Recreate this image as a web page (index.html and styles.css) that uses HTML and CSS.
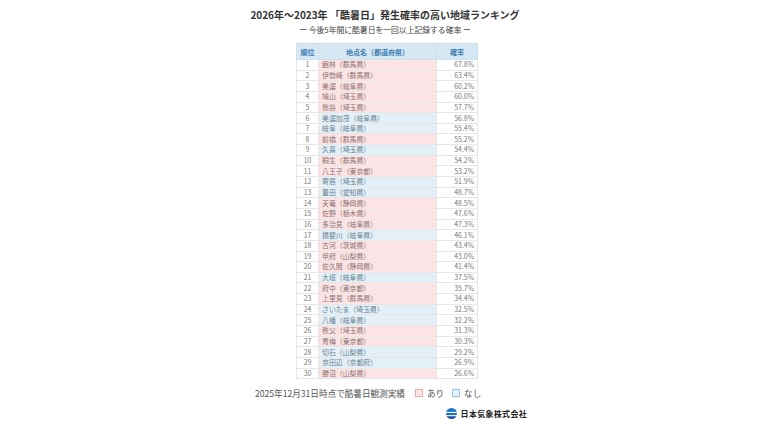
FILE: index.html
```html
<!DOCTYPE html>
<html lang="ja">
<head>
<meta charset="utf-8">
<title>酷暑日発生確率ランキング</title>
<link rel="stylesheet" href="styles.css">
</head>
<body>
<div class="page">
  <h1 class="title">2026年～2023年 「酷暑日」発生確率の高い地域ランキング</h1>
  <p class="sub">ー 今後5年間に酷暑日を一回以上記録する確率 ー</p>
  <table class="rank">
    <thead>
      <tr><th class="c-rank">順位</th><th class="c-name">地点名（都道府県）</th><th class="c-prob">確率</th></tr>
    </thead>
    <tbody>
      <tr><td class="c-rank">1</td><td class="c-name yes">館林（群馬県）</td><td class="c-prob">67.8%</td></tr>
      <tr><td class="c-rank">2</td><td class="c-name yes">伊勢崎（群馬県）</td><td class="c-prob">63.4%</td></tr>
      <tr><td class="c-rank">3</td><td class="c-name yes">美濃（岐阜県）</td><td class="c-prob">60.2%</td></tr>
      <tr><td class="c-rank">4</td><td class="c-name yes">鳩山（埼玉県）</td><td class="c-prob">60.0%</td></tr>
      <tr><td class="c-rank">5</td><td class="c-name yes">熊谷（埼玉県）</td><td class="c-prob">57.7%</td></tr>
      <tr><td class="c-rank">6</td><td class="c-name no">美濃加茂（岐阜県）</td><td class="c-prob">56.8%</td></tr>
      <tr><td class="c-rank">7</td><td class="c-name no">岐阜（岐阜県）</td><td class="c-prob">55.4%</td></tr>
      <tr><td class="c-rank">8</td><td class="c-name yes">前橋（群馬県）</td><td class="c-prob">55.2%</td></tr>
      <tr><td class="c-rank">9</td><td class="c-name no">久喜（埼玉県）</td><td class="c-prob">54.4%</td></tr>
      <tr><td class="c-rank">10</td><td class="c-name yes">桐生（群馬県）</td><td class="c-prob">54.2%</td></tr>
      <tr><td class="c-rank">11</td><td class="c-name yes">八王子（東京都）</td><td class="c-prob">53.2%</td></tr>
      <tr><td class="c-rank">12</td><td class="c-name no">寄居（埼玉県）</td><td class="c-prob">51.9%</td></tr>
      <tr><td class="c-rank">13</td><td class="c-name no">豊田（愛知県）</td><td class="c-prob">48.7%</td></tr>
      <tr><td class="c-rank">14</td><td class="c-name yes">天竜（静岡県）</td><td class="c-prob">48.5%</td></tr>
      <tr><td class="c-rank">15</td><td class="c-name yes">佐野（栃木県）</td><td class="c-prob">47.6%</td></tr>
      <tr><td class="c-rank">16</td><td class="c-name yes">多治見（岐阜県）</td><td class="c-prob">47.3%</td></tr>
      <tr><td class="c-rank">17</td><td class="c-name no">揖斐川（岐阜県）</td><td class="c-prob">46.1%</td></tr>
      <tr><td class="c-rank">18</td><td class="c-name yes">古河（茨城県）</td><td class="c-prob">43.4%</td></tr>
      <tr><td class="c-rank">19</td><td class="c-name yes">甲府（山梨県）</td><td class="c-prob">43.0%</td></tr>
      <tr><td class="c-rank">20</td><td class="c-name yes">佐久間（静岡県）</td><td class="c-prob">41.4%</td></tr>
      <tr><td class="c-rank">21</td><td class="c-name no">大垣（岐阜県）</td><td class="c-prob">37.5%</td></tr>
      <tr><td class="c-rank">22</td><td class="c-name yes">府中（東京都）</td><td class="c-prob">35.7%</td></tr>
      <tr><td class="c-rank">23</td><td class="c-name yes">上里見（群馬県）</td><td class="c-prob">34.4%</td></tr>
      <tr><td class="c-rank">24</td><td class="c-name no">さいたま（埼玉県）</td><td class="c-prob">32.5%</td></tr>
      <tr><td class="c-rank">25</td><td class="c-name no">八幡（岐阜県）</td><td class="c-prob">32.2%</td></tr>
      <tr><td class="c-rank">26</td><td class="c-name yes">秩父（埼玉県）</td><td class="c-prob">31.3%</td></tr>
      <tr><td class="c-rank">27</td><td class="c-name yes">青梅（東京都）</td><td class="c-prob">30.3%</td></tr>
      <tr><td class="c-rank">28</td><td class="c-name no">切石（山梨県）</td><td class="c-prob">29.2%</td></tr>
      <tr><td class="c-rank">29</td><td class="c-name no">京田辺（京都府）</td><td class="c-prob">26.9%</td></tr>
      <tr><td class="c-rank">30</td><td class="c-name yes">勝沼（山梨県）</td><td class="c-prob">26.6%</td></tr>
    </tbody>
  </table>
  <div class="foot">
    <div class="legend">
      <span>2025年12月31日時点で酷暑日観測実績</span>
      <span class="box box-yes"></span><span>あり</span>
      <span class="box box-no"></span><span>なし</span>
    </div>
    <div class="logo">
      <svg class="logo-mark" viewBox="0 0 20 20" width="11" height="11" aria-hidden="true">
        <defs><clipPath id="lc"><circle cx="10" cy="10" r="10"/></clipPath></defs>
        <g clip-path="url(#lc)">
          <rect x="0" y="0" width="20" height="7" fill="#1a73c6"/>
          <rect x="0" y="9" width="20" height="4" fill="#1a73c6"/>
          <rect x="0" y="15" width="20" height="5" fill="#1a4f9e"/>
        </g>
      </svg>
      <span class="logo-text">日本気象株式会社</span>
    </div>
  </div>
</div>
</body>
</html>
```
FILE: styles.css
```css
* { box-sizing: border-box; }
html, body { margin: 0; padding: 0; background: #ffffff; }
.page {
  width: 770px;
  height: 433px;
  display: flex;
  flex-direction: column;
  align-items: center;
  padding-top: 8px;
  font-family: "Noto Sans CJK JP", "Noto Sans", sans-serif;
  color: #333;
}
.title {
  margin: 0;
  font-size: 10px;
  line-height: 14px;
  font-weight: 700;
  color: #333;
}
.sub {
  margin: 2px 0 0;
  font-size: 7.8px;
  line-height: 12px;
  color: #444;
}
.rank {
  margin-top: 7px;
  margin-left: 4px;
  border-collapse: collapse;
  width: 181px;
  table-layout: fixed;
}
.rank th {
  height: 16px;
  padding: 0;
  background: #d6e8f3;
  color: #3a7cb2;
  font-size: 7px;
  font-weight: 700;
  border: 1px solid #cfe0ec;
  text-align: center;
}
.rank td {
  height: 10.65px;
  padding: 0;
  font-size: 6.9px;
  line-height: 9px;
  color: #777;
  border: 1px solid #e6e6e6;
}
.c-rank { width: 22px; text-align: center; }
.c-name { width: 118px; }
.c-prob { width: 41px; }
.rank td.c-name { padding-left: 3px; }
.rank td.c-prob { text-align: right; padding-right: 3px; }
.rank td.yes { background: #fde4e4; color: #8a7070; }
.rank td.no { background: #e4f0f8; color: #66808f; }
.foot {
  width: 272px;
  margin-left: 12px;
  margin-top: 8px;
  display: flex;
  flex-direction: column;
}
.legend {
  display: flex;
  align-items: center;
  font-size: 8.6px;
  line-height: 12px;
  color: #555;
}
.box {
  display: inline-block;
  width: 8px;
  height: 8px;
  margin: 0 4px 0 10px;
}
.box-yes { background: #fde4e4; border: 1px solid #eaa9a9; }
.box-no { margin-left: 8px; background: #e4f0f8; border: 1px solid #99c3df; }
.logo {
  display: flex;
  align-items: center;
  justify-content: flex-end;
  gap: 4px;
  margin-top: 9px;
}
.logo-text {
  font-size: 8px;
  font-weight: 700;
  color: #222;
  letter-spacing: 0.3px;
}
```
